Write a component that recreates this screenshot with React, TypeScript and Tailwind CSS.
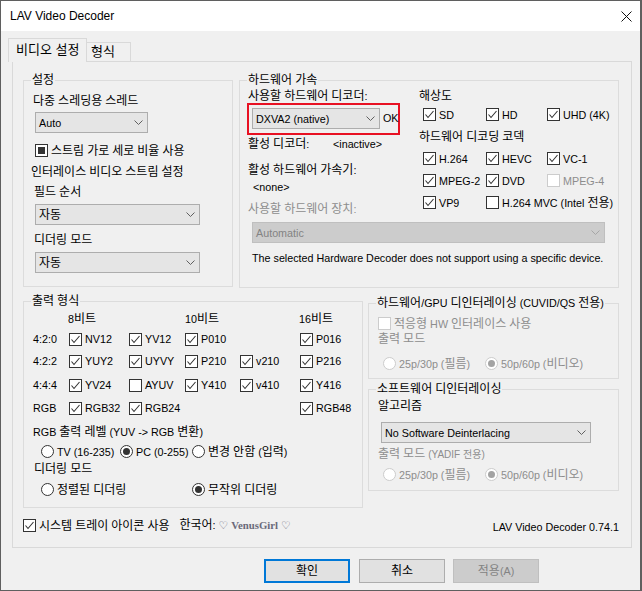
import React from "react";

// Hangul runs get a slightly larger size so their width matches the Windows UI font
function k(text: string) {
  return text.split(/([가-힣]+)/).map((part, i) =>
    /[가-힣]/.test(part) ? (
      <span key={i} className="text-[12px]">
        {part}
      </span>
    ) : (
      part
    )
  );
}

type BoxProps = { checked?: boolean; mixed?: boolean; disabled?: boolean };

function CheckBox({ checked, mixed, disabled }: BoxProps) {
  return (
    <span
      className={`flex h-[13px] w-[13px] shrink-0 items-center justify-center border bg-white ${
        disabled ? "border-[#cccccc]" : "border-[#333333]"
      }`}
    >
      {checked && (
        <svg width="11" height="11" viewBox="0 0 11 11" fill="none">
          <path d="M1.5 5.5L4 8.5L9.5 2" stroke="#333333" strokeWidth="1.1" />
        </svg>
      )}
      {mixed && <span className="h-[7px] w-[7px] bg-[#333333]" />}
    </span>
  );
}

type CheckProps = BoxProps & { label: string; className?: string };

function Check({ label, checked, mixed, disabled, className = "" }: CheckProps) {
  return (
    <div className={`flex h-[13px] items-center ${className}`}>
      <CheckBox checked={checked} mixed={mixed} disabled={disabled} />
      <span className={`ml-[3px] whitespace-nowrap leading-[14px] ${disabled ? "text-[#8d8d8d]" : ""}`}>{k(label)}</span>
    </div>
  );
}

function Radio({ label, checked, disabled, className = "" }: CheckProps) {
  return (
    <div className={`flex h-[13px] items-center ${className}`}>
      <span
        className={`flex h-[13px] w-[13px] shrink-0 items-center justify-center rounded-full border bg-white ${
          disabled ? "border-[#cccccc]" : "border-[#333333]"
        }`}
      >
        {checked && (
          <span className={`h-[7px] w-[7px] rounded-full ${disabled ? "bg-[#a3a3a3]" : "bg-[#333333]"}`} />
        )}
      </span>
      <span className={`ml-[3px] whitespace-nowrap leading-[14px] ${disabled ? "text-[#8d8d8d]" : ""}`}>{k(label)}</span>
    </div>
  );
}

function Combo({ text, disabled, className = "" }: { text: string; disabled?: boolean; className?: string }) {
  return (
    <div
      className={`flex h-[21px] shrink-0 items-center justify-between border pl-[3px] pr-[4px] ${
        disabled ? "border-[#bfbfbf] bg-[#cccccc] text-[#838383]" : "border-[#adadad] bg-[#e5e5e5]"
      } ${className}`}
    >
      <span className="whitespace-nowrap leading-[14px]">{k(text)}</span>
      <svg width="9" height="5" viewBox="0 0 9 5" fill="none">
        <path d="M0.5 0.5L4.5 4.5L8.5 0.5" stroke={disabled ? "#a6a6a6" : "#606060"} />
      </svg>
    </div>
  );
}

function Group({ title, className = "", children }: { title: string; className?: string; children?: React.ReactNode }) {
  return (
    <div className={`relative flex shrink-0 flex-col border border-[#dcdcdc] ${className}`}>
      <span className="absolute left-[7px] top-[-8px] whitespace-nowrap bg-[#f0f0f0] px-[1px] leading-[14px]">{k(title)}</span>
      {children}
    </div>
  );
}

function Label({ text, className = "" }: { text: string; className?: string }) {
  return <div className={`whitespace-nowrap leading-[14px] ${className}`}>{k(text)}</div>;
}

function SettingsGroup() {
  return (
    <Group title="설정" className="h-[207px] w-[210px]">
      <Label text="다중 스레딩용 스레드" className="ml-[9px] mt-[13px]" />
      <Combo text="Auto" className="ml-[11px] mt-[4px] w-[113px]" />
      <Check label="스트림 가로 세로 비율 사용" mixed className="ml-[11px] mt-[11px]" />
      <Label text="인터레이스 비디오 스트림 설정" className="ml-[7px] mt-[8px]" />
      <Label text="필드 순서" className="ml-[10px] mt-[6px]" />
      <Combo text="자동" className="ml-[11px] mt-[5px] w-[165px]" />
      <Label text="디더링 모드" className="ml-[10px] mt-[8px]" />
      <Combo text="자동" className="ml-[11px] mt-[5px] w-[165px]" />
    </Group>
  );
}

function HardwareGroup() {
  return (
    <Group title="하드웨어 가속" className="ml-[6px] h-[208px] w-[380px]">
      <div className="flex">
        <div className="flex w-[179px] shrink-0 flex-col">
          <Label text="사용할 하드웨어 디코더:" className="ml-[8px] mt-[8px]" />
          <div className="ml-[7px] flex h-[32px] w-[153px] items-start border-2 border-[#e81123] pl-[3px] pt-[1px]">
            <Combo text="DXVA2 (native)" className="mt-[2px] w-[128px]" />
            <span className="ml-[3px] mt-[5px] leading-[14px]">OK</span>
          </div>
          <div className="ml-[8px] mt-[2px] flex leading-[14px]">
            <span className="w-[85px]">{k("활성 디코더:")}</span>
            <span>&lt;inactive&gt;</span>
          </div>
          <Label text="활성 하드웨어 가속기:" className="ml-[8px] mt-[12px]" />
          <Label text="<none>" className="ml-[13px] mt-[3px]" />
          <Label text="사용할 하드웨어 장치:" className="ml-[8px] mt-[8px] text-[#8d8d8d]" />
        </div>
        <div className="flex flex-col">
          <Label text="해상도" className="mt-[8px]" />
          <div className="ml-[4px] mt-[5px] grid grid-cols-[63px_61px_auto]">
            <Check label="SD" checked />
            <Check label="HD" checked />
            <Check label="UHD (4K)" checked />
          </div>
          <Label text="하드웨어 디코딩 코덱" className="mt-[9px]" />
          <div className="ml-[4px] mt-[8px] grid grid-cols-[63px_61px_auto] gap-y-[9px]">
            <Check label="H.264" checked />
            <Check label="HEVC" checked />
            <Check label="VC-1" checked />
            <Check label="MPEG-2" checked />
            <Check label="DVD" checked />
            <Check label="MPEG-4" disabled />
            <Check label="VP9" checked />
            <Check label="H.264 MVC (Intel 전용)" className="col-span-2" />
          </div>
        </div>
      </div>
      <Combo text="Automatic" disabled className="ml-[12px] mt-[6px] w-[353px]" />
      <Label text="The selected Hardware Decoder does not support using a specific device." className="ml-[12px] mt-[8px]" />
    </Group>
  );
}

const FORMAT_ROWS: { label: string; cells: ({ name: string; on: boolean } | null)[] }[] = [
  {
    label: "4:2:0",
    cells: [{ name: "NV12", on: true }, { name: "YV12", on: true }, { name: "P010", on: true }, null, { name: "P016", on: true }],
  },
  {
    label: "4:2:2",
    cells: [
      { name: "YUY2", on: true },
      { name: "UYVY", on: true },
      { name: "P210", on: true },
      { name: "v210", on: true },
      { name: "P216", on: true },
    ],
  },
  {
    label: "4:4:4",
    cells: [
      { name: "YV24", on: true },
      { name: "AYUV", on: false },
      { name: "Y410", on: true },
      { name: "v410", on: true },
      { name: "Y416", on: true },
    ],
  },
  {
    label: "RGB",
    cells: [{ name: "RGB32", on: true }, { name: "RGB24", on: true }, null, null, { name: "RGB48", on: true }],
  },
];

const ROW_GAPS = ["mt-[6px]", "mt-[9px]", "mt-[11px]", "mt-[10px]"];

function OutputGroup() {
  return (
    <Group title="출력 형식" className="h-[207px] w-[340px]">
      <div className="mt-[10px] grid grid-cols-[45px_60px_56px_55px_60px_1fr] leading-[14px]">
        <span />
        <span className="col-span-2 -ml-[1px]">{k("8비트")}</span>
        <span className="col-span-2">{k("10비트")}</span>
        <span className="-ml-[1px]">{k("16비트")}</span>
      </div>
      {FORMAT_ROWS.map((row, i) => (
        <div key={row.label} className={`grid h-[13px] grid-cols-[45px_60px_56px_55px_60px_1fr] items-center ${ROW_GAPS[i]}`}>
          <span className="pl-[9px] leading-[14px]">{row.label}</span>
          {row.cells.map((cell, j) =>
            cell ? <Check key={cell.name} label={cell.name} checked={cell.on} /> : <span key={j} />
          )}
        </div>
      ))}
      <Label text="RGB 출력 레벨 (YUV -> RGB 변환)" className="ml-[9px] mt-[11px]" />
      <div className="ml-[17px] mt-[6px] flex">
        <Radio label="TV (16-235)" className="w-[79px]" />
        <Radio label="PC (0-255)" checked className="w-[72px]" />
        <Radio label="변경 안함 (입력)" />
      </div>
      <Label text="디더링 모드" className="ml-[10px] mt-[4px]" />
      <div className="ml-[17px] mt-[7px] flex">
        <Radio label="정렬된 디더링" className="w-[151px]" />
        <Radio label="무작위 디더링" checked />
      </div>
    </Group>
  );
}

function DeinterlaceColumn() {
  return (
    <div className="ml-[5px] flex w-[251px] flex-col">
      <Group title="하드웨어/GPU 디인터레이싱 (CUVID/QS 전용)" className="mt-[2px] h-[76px]">
        <Check label="적응형 HW 인터레이스 사용" disabled className="ml-[9px] mt-[13px]" />
        <Label text="출력 모드" className="ml-[9px] mt-[2px] text-[#8d8d8d]" />
        <div className="ml-[14px] mt-[11px] flex">
          <Radio label="25p/30p (필름)" disabled className="w-[102px]" />
          <Radio label="50p/60p (비디오)" checked disabled />
        </div>
      </Group>
      <Group title="소프트웨어 디인터레이싱" className="mt-[10px] h-[102px]">
        <Label text="알고리즘" className="ml-[9px] mt-[9px]" />
        <Combo text="No Software Deinterlacing" className="ml-[12px] mt-[9px] w-[210px]" />
        <div className="ml-[9px] mt-[4px] whitespace-nowrap leading-[14px] text-[#8d8d8d]">
          {k("출력 모드 ")}
          <span className="text-[10px]">(YADIF 전용)</span>
        </div>
        <div className="ml-[14px] mt-[6px] flex">
          <Radio label="25p/30p (필름)" disabled className="w-[102px]" />
          <Radio label="50p/60p (비디오)" checked disabled />
        </div>
      </Group>
    </div>
  );
}

export default function App() {
  return (
    <div className="flex h-[591px] w-[642px] flex-col overflow-hidden border border-r-2 border-[#5f5f5f] bg-[#f0f0f0] font-['Liberation_Sans','Noto_Sans_CJK_KR',sans-serif] text-[10.75px] text-black">
      <div className="flex h-[30px] shrink-0 items-center justify-between bg-white pl-[9px] pr-[8px]">
        <span className="text-[12px] leading-[16px]">LAV Video Decoder</span>
        <svg width="11" height="11" viewBox="0 0 11 11" fill="none">
          <path d="M0.5 0.5L10.5 10.5M10.5 0.5L0.5 10.5" stroke="#111111" strokeWidth="1" />
        </svg>
      </div>

      <div className="-mb-[1px] ml-[7px] mt-[7px] flex h-[24px] shrink-0 items-end text-[13px]">
        <div className="relative z-10 h-[24px] w-[79px] border border-b-0 border-[#d9d9d9] bg-[#f0f0f0] pl-[7px] pt-[3px] leading-[16px]">
          비디오 설정
        </div>
        <div className="h-[20px] w-[44px] border border-b-0 border-l-0 border-[#d9d9d9] bg-[#f0f0f0] pl-[4px] pt-[1px] leading-[16px]">
          형식
        </div>
      </div>

      <div className="ml-[11px] flex h-[487px] w-[620px] shrink-0 flex-col border border-[#d9d9d9] bg-[#f0f0f0] pl-[10px] pt-[18px]">
        <div className="flex items-start">
          <SettingsGroup />
          <HardwareGroup />
        </div>
        <div className="mt-[13px] flex items-start">
          <OutputGroup />
          <DeinterlaceColumn />
        </div>
        <div className="mt-[11px] flex h-[13px] items-center pr-[12px]">
          <Check label="시스템 트레이 아이콘 사용" checked />
          <span className="ml-[10px] whitespace-nowrap leading-[14px]">
            {k("한국어:")}{" "}
            <span className="font-['DejaVu_Sans'] text-[#6a6a7a]">♡</span>{" "}
            <span className="font-['Liberation_Serif'] font-bold text-[#6a6a7a]">VenusGirl</span>{" "}
            <span className="font-['DejaVu_Sans'] text-[#6a6a7a]">♡</span>
          </span>
          <span className="ml-auto mt-[3px] whitespace-nowrap leading-[14px]">LAV Video Decoder 0.74.1</span>
        </div>
      </div>

      <div className="ml-[263px] mt-[11px] flex">
        <button className="flex h-[24px] w-[86px] items-center justify-center border-2 border-[#0078d7] bg-[#e1e1e1]">
          {k("확인")}
        </button>
        <button className="ml-[9px] flex h-[24px] w-[86px] items-center justify-center border border-[#adadad] bg-[#e1e1e1]">
          {k("취소")}
        </button>
        <button className="ml-[8px] flex h-[24px] w-[86px] items-center justify-center border border-[#bfbfbf] bg-[#cccccc] text-[#838383]">
          {k("적용(A)")}
        </button>
      </div>
    </div>
  );
}
